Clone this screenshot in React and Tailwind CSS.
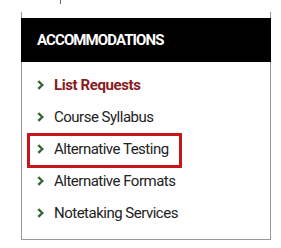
import React from 'react'

const items = [
  { label: 'List Requests', active: true },
  { label: 'Course Syllabus' },
  { label: 'Alternative Testing', boxed: true },
  { label: 'Alternative Formats' },
  { label: 'Notetaking Services' },
]

const Chevron = () => (
  <svg width="7" height="10" viewBox="0 0 7 10" className="shrink-0">
    <path d="M1.3 1.2 L5.3 5 L1.3 8.8" fill="none" stroke="#2f6b2f" strokeWidth="2.4" />
  </svg>
)

export default function App() {
  return (
    <div className="relative w-[281px] h-[248px] bg-white font-['Roboto',sans-serif] overflow-hidden">
      {/* clipped bit of text above */}
      <div className="absolute left-[60px] top-0 w-px h-[4px] bg-[#666]" />

      <div className="ml-[21px] mt-[12px] w-[250px] border-x border-b border-[#999] pt-[6px]">
        <div className="-mx-px h-[44px] bg-black flex items-center pl-[16px]">
          <span className="text-white font-bold text-[15px] tracking-[-0.9px]">ACCOMMODATIONS</span>
        </div>

        <ul className="pt-[7px] pb-[10px]">
          {items.map((item) => (
            <li key={item.label} className="relative h-[32px] flex items-center pl-[15px] gap-[10px]">
              <Chevron />
              <span
                className={
                  item.active
                    ? 'text-[15px] tracking-[-0.4px] font-bold text-[#8b1a22]'
                    : 'text-[15px] tracking-[-0.5px] text-[#222]'
                }
              >
                {item.label}
              </span>
              {item.boxed && (
                <div className="absolute left-[5px] top-0 w-[155px] h-[35px] border-[3px] border-[#c8161d]" />
              )}
            </li>
          ))}
        </ul>
      </div>
    </div>
  )
}
